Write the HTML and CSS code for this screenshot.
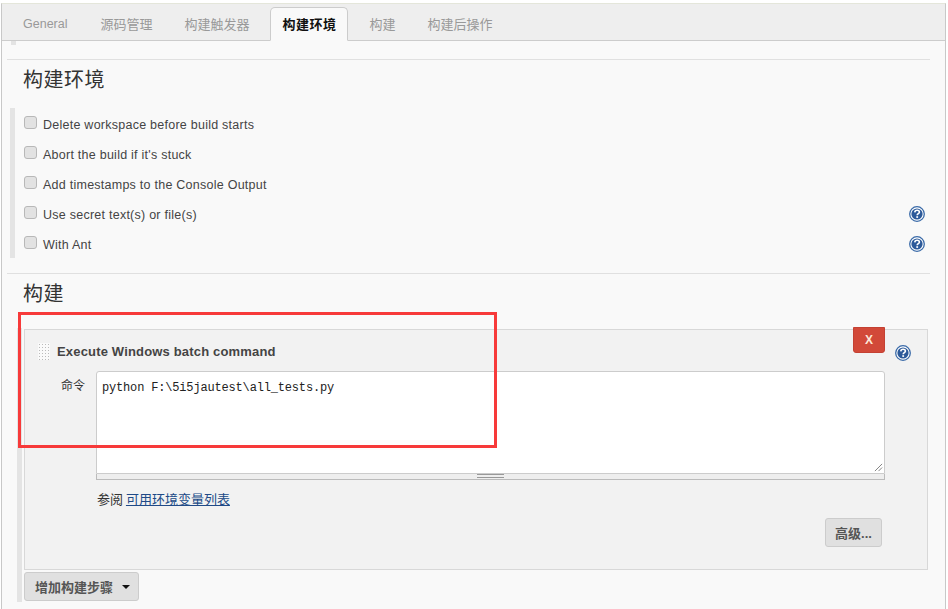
FILE: index.html
```html
<!DOCTYPE html>
<html lang="zh">
<head>
<meta charset="utf-8">
<title>构建环境</title>
<link rel="stylesheet" href="styles.css">
</head>
<body>
<div class="frame">
  <nav class="tabs">
    <span class="tab general">General</span>
    <span class="tab">源码管理</span>
    <span class="tab">构建触发器</span>
    <span class="tab active">构建环境</span>
    <span class="tab">构建</span>
    <span class="tab">构建后操作</span>
  </nav>
  <div class="stub"></div>
  <section class="section env">
    <h2>构建环境</h2>
    <div class="options">
      <label class="option"><input type="checkbox"><span class="opt-text">Delete workspace before build starts</span></label>
      <label class="option"><input type="checkbox"><span class="opt-text">Abort the build if it's stuck</span></label>
      <label class="option"><input type="checkbox"><span class="opt-text">Add timestamps to the Console Output</span></label>
      <label class="option"><input type="checkbox"><span class="opt-text">Use secret text(s) or file(s)</span>
        <svg class="help" viewBox="0 0 16 16"><use href="#q"/></svg></label>
      <label class="option"><input type="checkbox"><span class="opt-text">With Ant</span>
        <svg class="help" viewBox="0 0 16 16"><use href="#q"/></svg></label>
    </div>
  </section>
  <section class="section build">
    <h2>构建</h2>
    <div class="steps">
      <div class="card">
        <div class="card-head">
          <span class="grip"></span>
          <b class="card-title">Execute Windows batch command</b>
          <button class="del">X</button>
          <svg class="help card-help" viewBox="0 0 16 16"><use href="#q"/></svg>
        </div>
        <div class="field">
          <span class="field-label">命令</span>
          <div class="editor">
            <div class="code">python F:\5i5jautest\all_tests.py
              <svg class="resize" viewBox="0 0 10 10"><path d="M1 9 9 1M5 9 9 5" /></svg>
            </div>
            <div class="handle"><span class="lines"></span></div>
          </div>
        </div>
        <div class="see">参阅 <a href="#">可用环境变量列表</a></div>
        <div class="adv-row"><button class="btn">高级...</button></div>
      </div>
      <button class="btn add">增加构建步骤<span class="caret"></span></button>
    </div>
  </section>
  <div class="redbox"></div>
</div>
<svg class="defs" width="0" height="0">
  <defs>
    <g id="q">
      <circle cx="8" cy="8" r="7.3" fill="#fff" stroke="#3a6aa8" stroke-width="1.3"/>
      <circle cx="8" cy="8" r="5.6" fill="#2d5a9a"/>
      <path d="M5.8 6.4C5.9 4.9 6.9 4.3 8.1 4.3 9.4 4.3 10.4 5 10.4 6.2 10.4 7.6 8.2 7.8 8.2 9.3" fill="none" stroke="#fff" stroke-width="1.6"/>
      <rect x="7.3" y="10.2" width="1.8" height="1.7" fill="#fff"/>
    </g>
  </defs>
</svg>
</body>
</html>
```
FILE: styles.css
```css
html, body { margin: 0; padding: 0; background: #fff; }
body {
  width: 948px; height: 609px; overflow: hidden;
  font-family: "Liberation Sans", Arial, "Noto Sans CJK SC", sans-serif;
  font-size: 12px; color: #333;
}
.frame {
  position: relative;
  box-sizing: border-box;
  margin: 3px 0 0 1px;
  width: 945px; height: 606px;
  background: #f9f9f9;
  border-left: 1px solid #c8c8c8;
  border-right: 1px solid #c8c8c8;
  border-top: 1px solid #e4e6da;
  overflow: hidden;
}
.tabs {
  display: flex; align-items: flex-end;
  height: 37px; box-sizing: border-box;
  background: #eee;
  border-bottom: 1px solid #ccc;
  padding-left: 8px;
}
.tab {
  display: flex; align-items: center; justify-content: center;
  height: 34px; box-sizing: border-box;
  padding: 0 12px 2px; margin-right: 8px;
  font-size: 13px; color: #999;
  margin-bottom: -1px;
}
.general { padding: 0 13px; font-size: 12.5px; }
.tab.active {
  background: #f9f9f9; color: #111; font-weight: bold; letter-spacing: .5px;
  border: 1px solid #ccc; border-bottom-color: #f9f9f9;
  border-radius: 5px 5px 0 0; padding: 0 10px 2px 12px; margin-right: 10px;
}
.stub { width: 5px; height: 4px; margin-left: 9px; background: #e3e3e3; }
.section { margin: 0 15px 0 5px; border-top: 1px solid #e0e0e0; }
.env { margin-top: 14px; height: 213px; }
h2 { margin: 0; padding: 7px 0 0 16px; font: normal 20px/24px "Noto Sans CJK SC", sans-serif; letter-spacing: .5px; color: #333; }
.options { margin: 17px 0 0 3px; border-left: 5px solid #e4e4e4; height: 150px; }
.option { display: flex; align-items: center; box-sizing: border-box; height: 30px; padding: 4px 0 0 9px; color: #444; position: relative; }
.option input {
  appearance: none; box-sizing: border-box; width: 13px; height: 13px; margin: 0 6px 6px 0;
  background: #e2e2e2; border: 1px solid #b8b8b8; border-radius: 3px;
}
.opt-text { font-size: 12.5px; letter-spacing: .25px; }
.help { width: 16px; height: 16px; margin-left: auto; margin-right: 5px; margin-bottom: 2px; }
.steps { margin: 23px -4px 0 10px; border-left: 5px solid #e4e4e4; height: 273px; padding-top: 1px; }
.build { height: 350px; }
.card {
  box-sizing: border-box; margin-left: 2px; height: 241px; width: 904px;
  background: #f2f2f2; border: 1px solid #d8d8d8;
  position: relative;
}
.card-head { display: flex; align-items: center; height: 41px; padding: 2px 0 0 13px; box-sizing: border-box; }
.grip {
  width: 12px; height: 17px; margin-right: 7px;
  background-image: radial-gradient(#bbb 1px, transparent 1px);
  background-size: 3px 3px; background-color: #fafafa;
}
.card-title { font-size: 13px; letter-spacing: .17px; color: #444; }
.del {
  position: absolute; top: -3px; right: 42px; width: 32px; height: 26px;
  background: #d24939; border: 1px solid #c44133; border-radius: 0 0 3px 3px; color: #fde8d8;
  font: bold 12px "Liberation Sans", sans-serif; padding: 0;
}
.card-help { position: absolute; top: 15px; right: 16px; margin: 0; }
.field { display: flex; }
.field-label { width: 60px; text-align: right; font-size: 12px; padding-top: 5px; margin-right: 11px; font-family: "Noto Sans CJK SC", sans-serif; }
.editor { width: 789px; }
.code {
  position: relative; box-sizing: border-box; height: 103px;
  background: #fff; border: 1px solid #ccc; border-radius: 3px 3px 0 0;
  padding: 8px 5px; font: 12px/16px "Liberation Mono", monospace; letter-spacing: -.17px; color: #222; white-space: pre;
}
.resize { position: absolute; right: 1px; bottom: 1px; width: 9px; height: 9px; fill: none; stroke: #777; stroke-width: 1; }
.handle { height: 5px; background: #eee; border: 1px solid #bbb; border-top: 0; position: relative; display: flex; justify-content: center; }
.lines { width: 27px; height: 2px; border-top: 1px solid #999; border-bottom: 1px solid #999; }
.see { margin: 9px 0 0 72px; font-size: 13px; font-family: "Noto Sans CJK SC", sans-serif; }
.see a { color: #204a87; }
.adv-row { display: flex; justify-content: flex-end; margin: 10px 45px 0 0; }
.btn {
  background: #e0e0e0; border: 1px solid #ccc; border-radius: 3px; color: #555;
  font: bold 13px "Liberation Sans", "Noto Sans CJK SC", sans-serif; padding: 0;
}
.adv-row .btn { width: 57px; height: 29px; }
.add { margin: 2px 0 0 2px; width: 115px; height: 29px; display: flex; align-items: center; justify-content: center; padding-left: 2px; }
.caret { width: 0; height: 0; margin-left: 9px; border: 4px solid transparent; border-top-color: #111; border-bottom: 0; }
.redbox {
  position: absolute; left: 16px; top: 308px; width: 473px; height: 130px;
  border: 3px solid #f73a3a; pointer-events: none;
}
.defs { position: absolute; }
```
